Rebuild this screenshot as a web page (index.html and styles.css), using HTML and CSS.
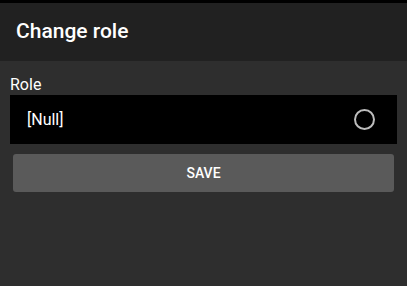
FILE: index.html
```html
<!DOCTYPE html>
<html lang="en">
<head>
  <meta charset="UTF-8" />
  <meta name="viewport" content="width=device-width, initial-scale=1.0"/>
  <title>Change role</title>
  <link rel="stylesheet" href="styles.css">
</head>
<body>

  <div class="dialog">
    <div class="header">
      <h1>Change role</h1>
    </div>

    <div class="content">
      <label class="fieldLabel">Role</label>
      <div class="option">
        <span class="optionText">[Null]</span>
        <span class="radio"></span>
      </div>
      <button class="saveBtn">SAVE</button>
    </div>
  </div>

</body>
</html>
```

FILE: styles.css
```css
body {
  font-family: Roboto, "Liberation Sans", Arial, sans-serif;
  background-color: #000;
  color: #fff;
  margin: 0;
  height: 100vh;
  display: flex;
  flex-direction: column;
}

.dialog {
  margin-top: 3px;
  flex: 1;
  display: flex;
  flex-direction: column;
  background-color: #2e2e2e;
}

.header {
  background-color: #212121;
  height: 58px;
  display: flex;
  align-items: center;
  padding-left: 16px;
}

h1 {
  margin: 0;
  font-size: 21px;
  font-weight: 500;
  padding-bottom: 3px;
}

.content {
  padding: 13px 10px 0 10px;
  display: flex;
  flex-direction: column;
}

.fieldLabel {
  font-size: 16px;
  line-height: 21px;
}

.option {
  background-color: #000;
  height: 49px;
  display: flex;
  align-items: center;
  justify-content: space-between;
  padding: 0 22px 0 17px;
}

.optionText {
  font-size: 16px;
}

.radio {
  width: 17px;
  height: 17px;
  border: 2px solid #bdbdbd;
  border-radius: 50%;
}

.saveBtn {
  margin: 10px 3px 0 3px;
  height: 38px;
  border: none;
  border-radius: 3px;
  background-color: #5a5a5a;
  color: #fff;
  font-family: inherit;
  font-size: 14px;
  font-weight: 500;
}
```
